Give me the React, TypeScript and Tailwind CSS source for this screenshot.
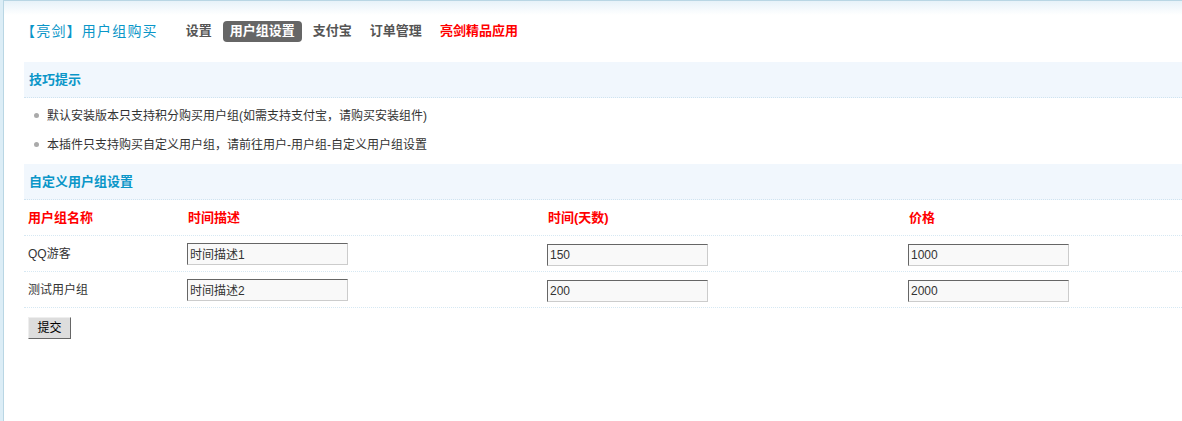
import React from "react";

const font = "font-['Liberation_Sans','Noto_Sans_CJK_SC',sans-serif]";

const navItems = [
  { label: "设置" },
  { label: "用户组设置", active: true },
  { label: "支付宝" },
  { label: "订单管理" },
  { label: "亮剑精品应用", red: true },
];

const tips = [
  "默认安装版本只支持积分购买用户组(如需支持支付宝，请购买安装组件)",
  "本插件只支持购买自定义用户组，请前往用户-用户组-自定义用户组设置",
];

const rows = [
  { name: "QQ游客", desc: "时间描述1", days: "150", price: "1000" },
  { name: "测试用户组", desc: "时间描述2", days: "200", price: "2000" },
];

const cols = "grid grid-cols-[160px_360px_361px_1fr] pl-[4px]";

function SectionTitle({ children }: { children: React.ReactNode }) {
  return (
    <div className="h-[36px] flex items-center pl-[5px] bg-[#f1f7fd] border-b border-dotted border-[#cfe3f0]">
      <span className="text-[13px] leading-[16px] font-bold text-[#0a96c8]">
        {children}
      </span>
    </div>
  );
}

function Field({ value }: { value: string }) {
  return (
    <input
      defaultValue={value}
      className="w-[161px] h-[22px] px-[2px] bg-[#f9f9f9] text-[12px] text-[#333] border border-t-[#666] border-l-[#666] border-r-[#ccc] border-b-[#ccc] outline-none"
    />
  );
}

export default function App() {
  return (
    <div
      className={`${font} w-[1182px] h-[421px] overflow-hidden bg-white border-l-[3px] border-[#dcedf6]`}
    >
      <div className="h-full border-l border-t border-[#b9d6e4] bg-[linear-gradient(#e7f2f9,#ffffff_14px)]">
        <div className="h-[61px] flex items-center pl-[17px] pb-[1px]">
          <h1 className="text-[14px] leading-[18px] text-[#0a96c8] tracking-[1.2px] mr-[21px]">
            【亮剑】用户组购买
          </h1>
          <ul className="flex items-center gap-[4px] list-none">
            {navItems.map((item) => (
              <li
                key={item.label}
                className={
                  "px-[7px] h-[21px] flex items-center rounded-[4px] text-[13px] font-bold " +
                  (item.active
                    ? "bg-[#666] text-white"
                    : item.red
                    ? "text-[#f00]"
                    : "text-[#555]")
                }
              >
                {item.label}
              </li>
            ))}
          </ul>
        </div>

        <div className="ml-[20px]">
          <SectionTitle>技巧提示</SectionTitle>
          <ul className="list-none pt-[3px] pb-[5px]">
            {tips.map((t) => (
              <li key={t} className="h-[29px] flex items-center pl-[10px] text-[12px] text-[#333]">
                <span className="w-[5px] h-[5px] rounded-full bg-[#aaa] mr-[8px]" />
                {t}
              </li>
            ))}
          </ul>

          <SectionTitle>自定义用户组设置</SectionTitle>
          <div className={`${cols} h-[36px] items-center border-b border-dotted border-[#d6e8f3]`}>
            {["用户组名称", "时间描述", "时间(天数)", "价格"].map((h) => (
              <span key={h} className="text-[13px] font-bold text-[#f00]">
                {h}
              </span>
            ))}
          </div>
          {rows.map((r) => (
            <div
              key={r.name}
              className={`${cols} h-[36px] items-center border-b border-dotted border-[#d6e8f3]`}
            >
              <span className="text-[12px] text-[#333]">{r.name}</span>
              <div className="-ml-[1px] pt-[1px]">
                <Field value={r.desc} />
              </div>
              <div className="-ml-[1px] pt-[1px]">
                <Field value={r.days} />
              </div>
              <div className="-ml-[1px] pt-[1px]">
                <Field value={r.price} />
              </div>
            </div>
          ))}
          <div className="pl-[4px] pt-[7px]">
            <button className="w-[43px] h-[22px] bg-[#ddd] text-[12px] text-black border border-t-[#eee] border-l-[#eee] border-r-[#666] border-b-[#666]">
              提交
            </button>
          </div>
        </div>
      </div>
    </div>
  );
}
